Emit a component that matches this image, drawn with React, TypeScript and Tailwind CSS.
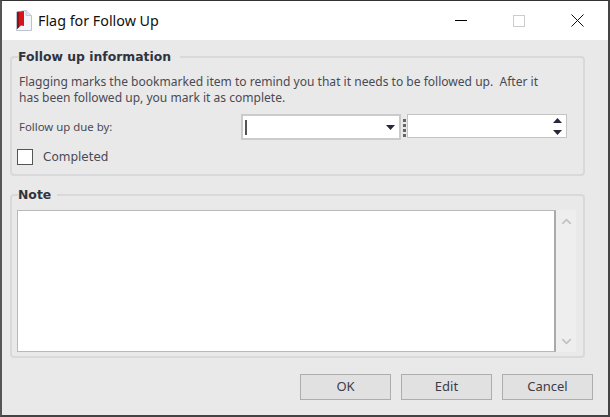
import React from 'react';
import { ChevronUp, ChevronDown } from 'lucide-react';

const FlagIcon = () => (
  <svg width="17" height="21" viewBox="0 0 17 21" className="shrink-0">
    <path d="M1.5 2 L11 0.5 L16.5 5.5 L16.5 20.5 L1.5 20.5 Z" fill="#f4f6fa" stroke="#bcc3cf" strokeWidth="1" />
    <path d="M11 0.5 L11 5.5 L16.5 5.5" fill="#e3e7ee" stroke="#c5cad4" strokeWidth="1" />
    <path d="M2 2 L9 1 L9 16 L6 15.5 L2 19 Z" fill="#d4151b" />
    <path d="M2 2 L4 1.7 L4 17.2 L2 19 Z" fill="#8f1114" />
  </svg>
);

const Caret = ({ up }: { up?: boolean }) => (
  <svg width="9" height="5" viewBox="0 0 9 5">
    <path d={up ? 'M4.5 0 L9 5 L0 5 Z' : 'M0 0 L9 0 L4.5 5 Z'} fill="#26263c" />
  </svg>
);

const Button = ({ label }: { label: string }) => (
  <button className="w-[91px] h-[26px] bg-[#e1e1e1] border border-[#adadad] text-[13px] text-[#3c3c46]">
    {label}
  </button>
);

export default function App() {
  return (
    <div
      className="w-[610px] h-[417px] flex flex-col bg-[#e9e9e9] border-t border-l-2 border-r-2 border-b-2 border-t-[#333] border-l-[#555] border-r-[#444] border-b-[#444] text-[#4a4a54]"
      style={{ fontFamily: '"Noto Sans", "DejaVu Sans", sans-serif' }}
    >
      {/* Title bar */}
      <div className="h-[39px] shrink-0 bg-white flex items-center pl-[13px]">
        <FlagIcon />
        <span className="ml-[6px] text-[14.3px] text-[#111]">Flag for Follow Up</span>
        <div className="ml-auto mr-[2px] flex items-center">
          <div className="w-[58px] h-[39px] flex items-center justify-center">
            <div className="w-[12px] h-px bg-black" />
          </div>
          <div className="w-[58px] h-[39px] flex items-center justify-center">
            <div className="w-[12px] h-[12px] border border-[#ccc]" />
          </div>
          <div className="w-[58px] h-[39px] flex items-center justify-center">
            <svg width="13" height="13" viewBox="0 0 13 13">
              <path d="M0.5 0.5 L12.5 12.5 M12.5 0.5 L0.5 12.5" stroke="#111" strokeWidth="1" />
            </svg>
          </div>
        </div>
      </div>

      <div className="flex-1 flex flex-col pl-[8px] pr-[23px] pt-[9px]">
        {/* Follow up information */}
        <fieldset className="h-[127px] border-2 border-[#d9d9dc] rounded-[4px] pl-[7px] pr-[15px]">
          <legend className="ml-[-1px] pr-[9px] text-[12.4px] font-bold leading-[16px] text-[#2f3440]" style={{ fontFamily: '"DejaVu Sans", sans-serif' }}>
            Follow up information
          </legend>
          <p className="mt-[9px] text-[12.05px] leading-[16px] whitespace-pre">
            {'Flagging marks the bookmarked item to remind you that it needs to be followed up.  After it\nhas been followed up, you mark it as complete.'}
          </p>
          <div className="mt-[8px] flex items-start h-[26px]">
            <span className="w-[222px] h-[25px] flex items-center text-[11.4px]">Follow up due by:</span>
            <div className="w-[160px] h-[26px] bg-white border-2 border-[#cbcbcb] flex items-center pl-[2px] pr-[4px]">
              <div className="w-[2px] h-[15px] bg-[#555]" />
              <div className="ml-auto"><Caret /></div>
            </div>
            <div className="w-[6px] mt-[5px] flex flex-col items-center gap-[2px]">
              <div className="w-[3px] h-[3px] bg-[#666]" />
              <div className="w-[3px] h-[3px] bg-[#666]" />
              <div className="w-[3px] h-[3px] bg-[#666]" />
              <div className="w-[3px] h-[3px] bg-[#666]" />
            </div>
            <div className="w-[160px] h-[24px] bg-white border border-[#c4c4c4] flex flex-col items-end justify-center gap-[7px] pr-[4px]">
              <Caret up />
              <Caret />
            </div>
          </div>
          <label className="mt-[7px] flex items-center gap-[10px] text-[12px]" style={{ fontFamily: '"DejaVu Sans", sans-serif' }}>
            <span className="ml-[-2px] w-[16px] h-[16px] bg-white border border-[#555]" />
            <span className="mt-[1px]">Completed</span>
          </label>
        </fieldset>

        {/* Note */}
        <fieldset className="mt-[11px] h-[171px] border-2 border-[#d9d9dc] rounded-[4px] pl-[5px] pr-[6px] flex">
          <legend className="ml-[1px] pr-[6px] text-[12.4px] font-bold leading-[16px] text-[#2f3440]" style={{ fontFamily: '"DejaVu Sans", sans-serif' }}>
            Note
          </legend>
          <div className="mt-[7px] flex h-[142px]">
            <div className="w-[539px] bg-white border border-[#b9b9bd] border-r-2 border-r-[#aaa]" />
            <div className="w-[20px] bg-[#eeeeee] flex flex-col items-center justify-between pt-[4px] pb-[3px] text-[#c4c4c4]">
              <ChevronUp size={15} strokeWidth={3} />
              <ChevronDown size={15} strokeWidth={3} />
            </div>
          </div>
        </fieldset>

        {/* Buttons */}
        <div className="mt-[16px] flex justify-end gap-[10px] mr-[-8px]">
          <Button label="OK" />
          <Button label="Edit" />
          <Button label="Cancel" />
        </div>
      </div>
    </div>
  );
}
